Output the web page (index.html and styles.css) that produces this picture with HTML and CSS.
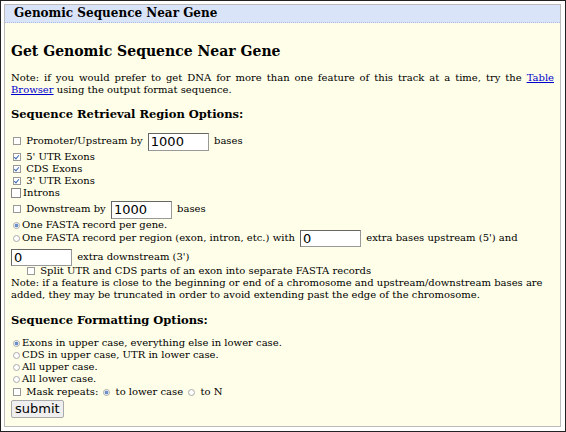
FILE: index.html
```html
<!DOCTYPE html>
<html lang="en">
  <head>
    <meta charset="UTF-8" />
    <title>Genomic Sequence Near Gene</title>
    <link rel="stylesheet" href="styles.css">
  </head>
  <body>
    <div class="frame">
      <div class="box">
        <div class="hdr">Genomic Sequence Near Gene</div>
        <form class="content">
          <h2 class="title">Get Genomic Sequence Near Gene</h2>
          <p class="note just">Note: if you would prefer to get DNA for more than one feature of this track at a time, try the <a href="#">Table</a> <a href="#">Browser</a> using the output format sequence.</p>
          <h3 class="sub">Sequence Retrieval Region Options:</h3>

          <div class="row big"><input type="checkbox" class="cb"> Promoter/Upstream by <input type="text" class="num" value="1000"> bases</div>
          <div class="row"><input type="checkbox" class="cb" checked> 5' UTR Exons</div>
          <div class="row"><input type="checkbox" class="cb" checked> CDS Exons</div>
          <div class="row"><input type="checkbox" class="cb" checked> 3' UTR Exons</div>
          <div class="row"><input type="checkbox" class="cb wide">Introns</div>
          <div class="row big"><input type="checkbox" class="cb"> Downstream by <input type="text" class="num" value="1000"> bases</div>
          <div class="row"><input type="radio" name="rec" class="rd" checked>One FASTA record per gene.</div>
          <div class="row region"><input type="radio" name="rec" class="rd">One FASTA record per region (exon, intron, etc.) with <input type="text" class="num" value="0"> extra bases upstream (5') and</div>
          <div class="row region second"><input type="text" class="num first" value="0"> extra downstream (3')</div>
          <div class="row indent"><input type="checkbox" class="cb"> Split UTR and CDS parts of an exon into separate FASTA records</div>
          <p class="note">Note: if a feature is close to the beginning or end of a chromosome and upstream/downstream bases are added, they may be truncated in order to avoid extending past the edge of the chromosome.</p>

          <h3 class="sub">Sequence Formatting Options:</h3>
          <div class="row"><input type="radio" name="fmt" class="rd" checked>Exons in upper case, everything else in lower case.</div>
          <div class="row"><input type="radio" name="fmt" class="rd">CDS in upper case, UTR in lower case.</div>
          <div class="row"><input type="radio" name="fmt" class="rd">All upper case.</div>
          <div class="row"><input type="radio" name="fmt" class="rd">All lower case.</div>
          <div class="row mask"><input type="checkbox" class="cb"> Mask repeats: <input type="radio" name="mask" class="rd" checked> to lower case <input type="radio" name="mask" class="rd"> to N</div>
          <div class="row"><button type="button" class="btn">submit</button></div>
        </form>
      </div>
    </div>
  </body>
</html>
```

FILE: styles.css
```css
body {
  margin: 0;
  font-family: 'DejaVu Serif', serif;
}
.frame {
  height: 432px;
  box-sizing: border-box;
  border: 1px solid #222;
  padding: 3px 4px 4px 3px;
  background-color: white;
}
.box {
  height: 100%;
  box-sizing: border-box;
  border: 1px solid #bbb;
  background-color: #fffee8;
}
.hdr {
  height: 17px;
  line-height: 17px;
  padding-left: 9px;
  background-color: #d9e4f8;
  border-bottom: 1px dotted #a9bbe6;
  font-size: 12px;
  font-weight: bold;
}
.content {
  padding: 0 6px;
  font-size: 10px;
  line-height: 12px;
}
.title {
  margin: 20px 0 13px;
  font-size: 14px;
  line-height: 16px;
}
.note {
  margin: 0 0 12px;
}
.note.just {
  margin-bottom: 11px;
  text-align: justify;
}
.note a {
  color: #0000cc;
}
.sub {
  margin: 0 0 10px;
  font-size: 11.5px;
  line-height: 14px;
}
.row {
  white-space: nowrap;
}
.row.big {
  height: 20px;
  line-height: 20px;
}
.row.region {
  height: 17px;
  line-height: 17px;
  margin-top: -2px;
}
.row.region.second {
  margin-top: 2px;
}
.row.indent {
  padding-left: 14px;
}
.row.mask {
  margin-top: 1px;
}
.cb, .rd {
  appearance: none;
  -webkit-appearance: none;
  margin: 0 2px 0 2px;
  vertical-align: -1px;
  width: 8px;
  height: 8px;
  box-sizing: border-box;
  background-color: white;
  border: 1px solid #999;
  position: relative;
}
.cb.wide {
  width: 10px;
  height: 10px;
  margin-left: 0;
  border-color: #888;
  vertical-align: -2px;
}
.cb:checked::after {
  content: '';
  position: absolute;
  left: 1px;
  top: 0;
  width: 2px;
  height: 4px;
  border-right: 1px solid #3d6bb3;
  border-bottom: 1px solid #3d6bb3;
  transform: rotate(40deg);
}
.rd {
  border-radius: 50%;
  width: 7px;
  height: 7px;
  border-color: #aaa;
}
.rd:checked {
  background: radial-gradient(circle, #6b8fc8 0, #6b8fc8 1.6px, white 2.2px);
}
.num {
  width: 61px;
  height: 18px;
  box-sizing: border-box;
  margin: 0 2px;
  padding: 0 2px;
  border: 1px solid #999;
  border-top-color: #666;
  border-left-color: #666;
  font-family: 'DejaVu Sans', sans-serif;
  font-size: 13px;
  vertical-align: middle;
}
.row.region .num {
  height: 17px;
}
.num.first {
  margin-left: 0;
}
.btn {
  margin-top: 2px;
  height: 18px;
  padding: 0 3px;
  border: 1px solid #aaa;
  border-radius: 2px;
  background-color: #efefef;
  font-family: 'DejaVu Sans', sans-serif;
  font-size: 13px;
  line-height: 14px;
}
```
